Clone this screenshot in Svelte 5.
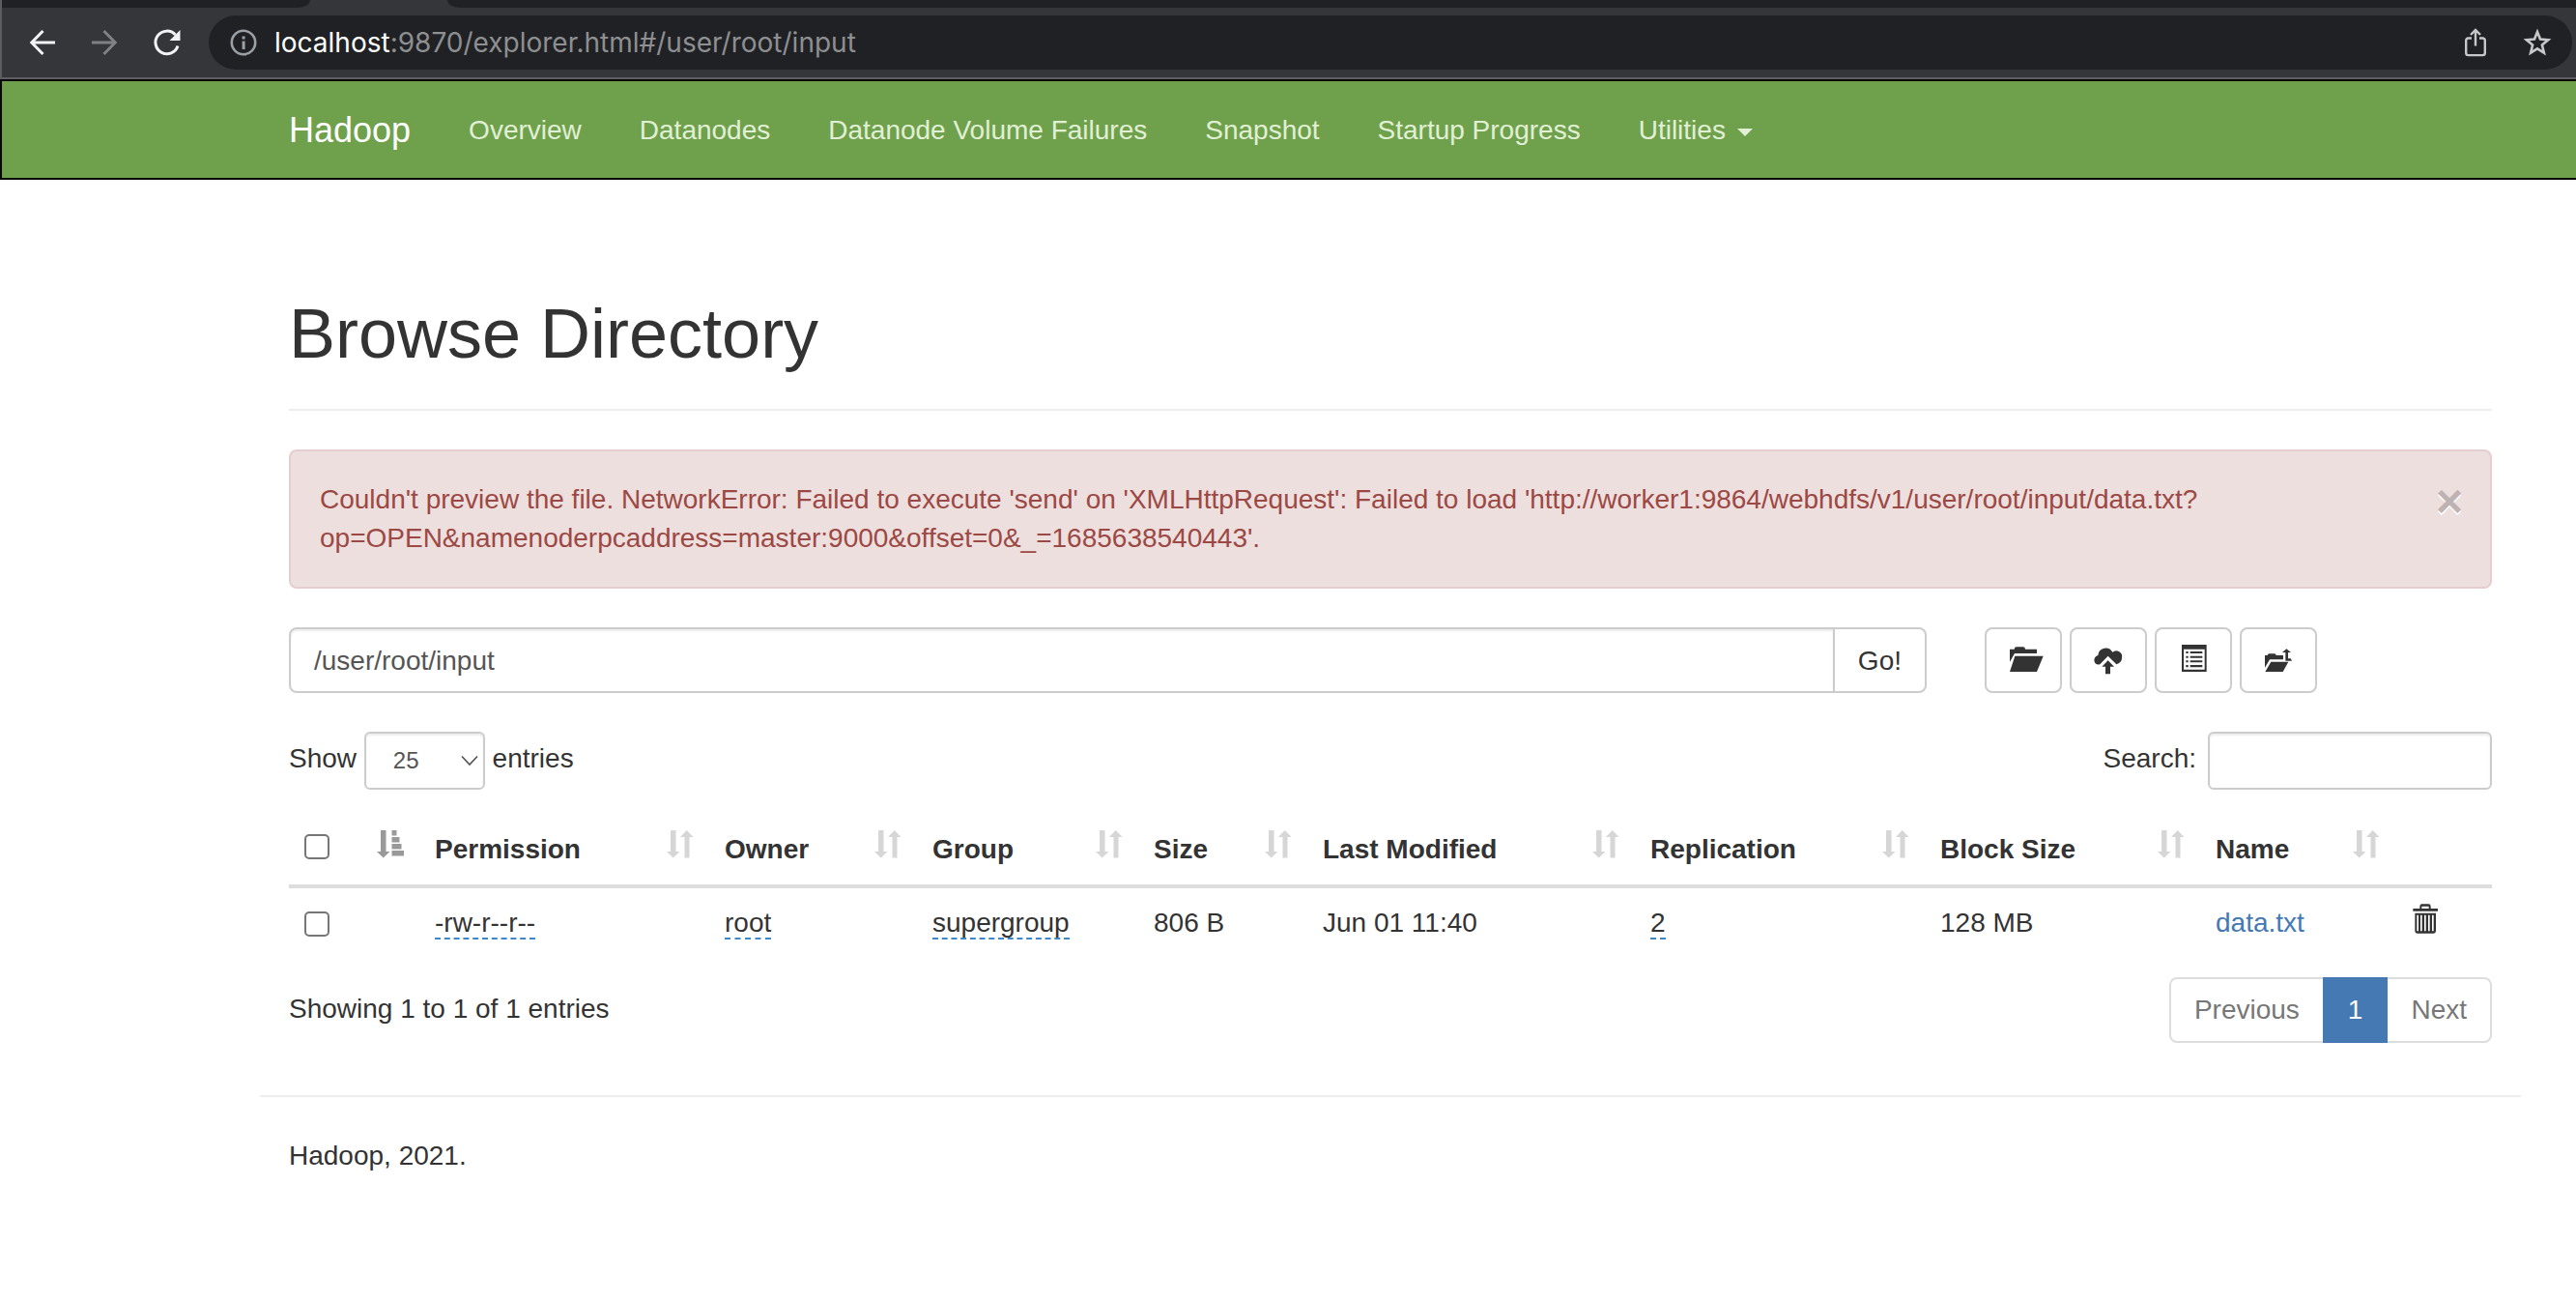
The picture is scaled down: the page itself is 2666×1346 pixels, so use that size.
<script>
  const navLinks = ['Overview', 'Datanodes', 'Datanode Volume Failures', 'Snapshot', 'Startup Progress'];

  // Relative column weights, turned into percentages for the <col> elements.
  const columns = [
    { key: 'select', weight: 64 },
    { key: 'order', weight: 71, sort: 'asc' },
    { key: 'permission', label: 'Permission', weight: 300, sort: 'both' },
    { key: 'owner', label: 'Owner', weight: 215, sort: 'both' },
    { key: 'group', label: 'Group', weight: 229, sort: 'both' },
    { key: 'size', label: 'Size', weight: 175, sort: 'both' },
    { key: 'modified', label: 'Last Modified', weight: 339, sort: 'both' },
    { key: 'replication', label: 'Replication', weight: 300, sort: 'both' },
    { key: 'block', label: 'Block Size', weight: 285, sort: 'both' },
    { key: 'name', label: 'Name', weight: 202, sort: 'both' },
    { key: 'remove', weight: 100 }
  ];
  const total = columns.reduce((sum, c) => sum + c.weight, 0);

  const files = [
    {
      permission: '-rw-r--r--',
      owner: 'root',
      group: 'supergroup',
      size: '806 B',
      modified: 'Jun 01 11:40',
      replication: '2',
      block: '128 MB',
      name: 'data.txt'
    }
  ];

  let path = $state('/user/root/input');
  let pageSize = $state('25');
  let search = $state('');
</script>

<div class="browser">
  <div class="tabs"><span class="tab-before"></span><span class="tab-after"></span></div>
  <div class="toolbar">
    <button class="tool back" aria-label="Back">
      <svg width="26" height="26" viewBox="0 0 26 26" fill="none" stroke="#f1f3f4" stroke-width="3"><path d="M26 13H2M13.500 1L1.800 13l11.700 12" /></svg>
    </button>
    <button class="tool forward" aria-label="Forward">
      <svg width="26" height="26" viewBox="0 0 26 26" fill="none" stroke="#808184" stroke-width="3"><path d="M0 13h24M12.500 1l11.700 12-11.700 12" /></svg>
    </button>
    <button class="tool reload" aria-label="Reload">
      <svg width="28" height="28" viewBox="0 0 28 28"><path d="M25 17.500A11.800 11.800 0 1 1 22.500 6" fill="none" stroke="#f1f3f4" stroke-width="3" /><path d="M27.500 1v11H16.500z" fill="#f1f3f4" /></svg>
    </button>
    <div class="omnibox">
      <svg class="info" width="28" height="28" viewBox="0 0 28 28"><circle cx="14" cy="14" r="12.200" fill="none" stroke="#9aa0a6" stroke-width="2.600" /><path d="M12.600 7.500h3v3h-3zM12.600 12.500h3v8.500h-3z" fill="#9aa0a6" /></svg>
      <span class="url"><b>localhost</b>:9870/explorer.html#/user/root/input</span>
      <button class="tool share" aria-label="Share">
        <svg width="24" height="30" viewBox="0 0 24 30" fill="none" stroke="#c6c7c8" stroke-width="2.400"><path d="M8 10.500H4.500a2.300 2.300 0 0 0-2.300 2.300v13a2.300 2.300 0 0 0 2.300 2.300h15a2.300 2.300 0 0 0 2.300-2.300v-13a2.300 2.300 0 0 0-2.300-2.300H16M12 18.500V2.500M7 7l5-5 5 5" /></svg>
      </button>
      <button class="tool" aria-label="Bookmark">
        <svg width="30" height="30" viewBox="0 0 30 30" fill="none" stroke="#c6c7c8" stroke-width="2.600"><path d="M15 4l3 7.600 8.200.600-6.300 5.300 2 8.100L15 21.300l-6.900 4.300 2-8.100-6.300-5.300 8.200-.600z" /></svg>
      </button>
    </div>
  </div>
</div>

<nav class="navbar">
  <a class="brand" href="#home">Hadoop</a>
  {#each navLinks as link}
    <a class="nav-link" href="#nav">{link}</a>
  {/each}
  <a class="nav-link" href="#utilities">Utilities <span class="caret"></span></a>
</nav>

<main class="container">
  <header class="page-header"><h1>Browse Directory</h1></header>

  <div class="alert" role="alert">
    <p>Couldn't preview the file. NetworkError: Failed to execute 'send' on 'XMLHttpRequest': Failed to load 'http://worker1:9864/webhdfs/v1/user/root/input/data.txt?<wbr />op=OPEN&amp;namenoderpcaddress=master:9000&amp;offset=0&amp;_=1685638540443'.</p>
    <button class="close" aria-label="Close">×</button>
  </div>

  <div class="path-row">
    <form class="path-form" onsubmit={(e) => e.preventDefault()}>
      <input class="path" type="text" aria-label="Directory" bind:value={path} />
      <button class="go">Go!</button>
    </form>
    <div class="actions">
      <button class="btn" aria-label="Create directory">
        <svg viewBox="120 87 84 84"><path d="M120 134V95h14q0-7 7-7h20q7 0 7 7h36v13h-69zM136 116h88l-20 49h-84z" /></svg>
      </button>
      <button class="btn" aria-label="Upload files">
        <svg viewBox="384 87 84 84"><path d="M400 142Q384 145 382 130Q382 118 394 114A24 24 0 0 1 439 104A18 18 0 0 1 468 122Q468 136 451 142L425 116z" /><path d="M425 130l19 19h-12v23h-15v-23h-11z" /></svg>
      </button>
      <button class="btn" aria-label="Cut and paste">
        <svg viewBox="648 87 84 84"><path fill-rule="evenodd" d="M654 81h77v84h-77zM660 95v63h65V95z" /><path d="M667 102h7v6h-7zM680 102h38v6h-38zM667 116h7v6h-7zM680 116h38v6h-38zM667 130h7v6h-7zM680 130h38v6h-38zM667 144h7v7h-7zM680 144h38v7h-38z" /></svg>
      </button>
      <button class="btn" aria-label="Parent directory">
        <svg viewBox="909 87 84 84"><path d="M909 152v-38h8q1-5 5-5h17q5 0 5 5h22v13h-42zM928 134h54l-17 31h-55zM976 94l14 11h-9v19h8l4 7h-20v-26h-10z" /></svg>
      </button>
    </div>
  </div>

  <div class="table-tools">
    <label>Show
      <span class="select-wrap"><select bind:value={pageSize}><option>25</option><option>50</option><option>100</option></select><svg class="chevron" width="18" height="12" viewBox="0 0 18 12" fill="none" stroke="#555" stroke-width="1.700"><path d="M1 1.500l8 8.500 8-8.500" /></svg></span>
      entries</label>
    <label class="search">Search:<input type="search" bind:value={search} /></label>
  </div>

  <table>
    <colgroup>
      {#each columns as c}<col style:width="{(c.weight / total) * 100}%" />{/each}
    </colgroup>
    <thead>
      <tr>
        {#each columns as c}
          <th scope="col">
            {#if c.key === 'select'}
              <input type="checkbox" aria-label="Select all" />
            {:else if c.sort}
              <div class="head">
                <span>{c.label ?? ''}</span>
                {#if c.sort === 'both'}
                  <svg width="28" height="29" viewBox="0 0 28 29" fill="#d6d6d6"><path d="M4 0h5.500v22H13.500L6.700 28.500 0 22h4zM18.500 28.500V7H14L20.700 0l6.800 7H23.500v21.500z" /></svg>
                {:else}
                  <svg width="28" height="29" viewBox="0 0 28 29" fill="#999"><path d="M4 0h5.500v22H13.500L6.700 28.500 0 22h4zM15.500 0h5v5.500h-5zM15.500 7h8v5.500h-8zM15.500 14h10v5.500h-10zM15.500 21h12.500v5.500h-12.500z" /></svg>
                {/if}
              </div>
            {/if}
          </th>
        {/each}
      </tr>
    </thead>
    <tbody>
      {#each files as f}
        <tr>
          <td><input type="checkbox" aria-label="Select {f.name}" /></td>
          <td></td>
          <td><a class="editable" href="#permission">{f.permission}</a></td>
          <td><a class="editable" href="#owner">{f.owner}</a></td>
          <td><a class="editable" href="#group">{f.group}</a></td>
          <td>{f.size}</td>
          <td>{f.modified}</td>
          <td><a class="editable" href="#replication">{f.replication}</a></td>
          <td>{f.block}</td>
          <td><a class="file" href="#file">{f.name}</a></td>
          <td>
            <button class="trash" aria-label="Delete {f.name}">
              <svg width="28" height="31" viewBox="887 289 84 93"><path fill="#333" fill-rule="evenodd" d="M891 304h21v-7q0-7 7-7h20q7 0 7 7v7h22v8h-77zM918 304h22v-7h-22zM897 318h65v56q0 7-7 7h-51q-7 0-7-7zM903 324v50h5v-50zM914 324v50h5v-50zM926 324v50h5v-50zM938 324v50h5v-50zM950 324v50h5v-50z" /></svg>
            </button>
          </td>
        </tr>
      {/each}
    </tbody>
  </table>

  <div class="table-foot">
    <p>Showing 1 to 1 of 1 entries</p>
    <ul class="pagination">
      <li><a href="#previous">Previous</a></li>
      <li><a class="active" href="#1" aria-current="page">1</a></li>
      <li><a href="#next">Next</a></li>
    </ul>
  </div>
</main>

<footer><p>Hadoop, 2021.</p></footer>

<style>
  :global(body) {
    background: #fff;
    color: #333;
    font: 28px/40px 'Liberation Sans', Arial, sans-serif;
  }
  :global(*) { box-sizing: border-box; }
  p, h1, ul { margin: 0; padding: 0; }
  a { color: inherit; text-decoration: none; }
  button, input, select { margin: 0; font: inherit; color: inherit; }
  svg { display: block; flex: none; overflow: visible; }

  .browser {
    background: #35363a;
    border-left: 2px solid #5c5d60;
    border-bottom: 2px solid #5f5f63;
  }
  .tabs { display: flex; gap: 142px; height: 8px; }
  .tabs span { background: #202124; }
  .tab-before { width: 319px; border-bottom-right-radius: 14px 8px; }
  .tab-after { flex: 1; border-bottom-left-radius: 14px 8px; }
  .toolbar {
    display: flex;
    align-items: center;
    height: 72px;
    padding: 0 4px 0 29px;
  }
  .tool { padding: 0; border: 0; background: none; }
  .forward { margin-left: 38px; }
  .reload { margin: 0 29px 0 38px; }
  .omnibox {
    flex: 1;
    display: flex;
    align-items: center;
    height: 56px;
    padding: 0 21px 0 22px;
    border-radius: 28px;
    background: #202124;
  }
  .info { margin-right: 18px; }
  .url {
    flex: 1;
    color: #8e8f91;
    font-family: Inter, Roboto, sans-serif;
    font-size: 28px;
  }
  .url b { color: #fff; font-weight: 400; }
  .share { margin-right: 37px; }

  .navbar {
    display: flex;
    align-items: center;
    height: 104px;
    padding-left: 267px;
    border: 2px solid #080808;
    border-width: 2px 0 2px 2px;
    background: #6fa14c;
  }
  .navbar a { padding: 2px 30px 0; white-space: nowrap; }
  .navbar .brand { color: #fff; font-size: 36px; }
  .nav-link { color: #e1efd5; }
  .caret {
    display: inline-block;
    margin-left: 4px;
    vertical-align: middle;
    border: solid transparent;
    border-width: 8px 8px 0;
    border-top-color: #e1efd5;
  }

  .container { padding: 119px 87px 0 299px; }
  .page-header { padding-bottom: 38px; border-bottom: 2px solid #eee; }
  h1 { font-size: 72px; line-height: 80px; font-weight: 400; }

  .alert {
    display: flex;
    justify-content: space-between;
    align-items: flex-start;
    gap: 20px;
    margin: 40px 0;
    padding: 30px 28px 30px 30px;
    border: 2px solid #e6cdd0;
    border-radius: 8px;
    background: #eedfdf;
    color: #9c4844;
  }
  .close {
    padding: 0;
    border: 0;
    background: none;
    color: #beb2b2;
    font-size: 48px;
    line-height: 44px;
    font-weight: 700;
    text-shadow: 0 2px 0 #fff;
  }

  .path-row { display: grid; grid-template-columns: 3fr 1fr; margin: 0 -30px; }
  .path-form { display: flex; margin: 0 30px; }
  .path {
    flex: 1;
    min-width: 0;
    height: 68px;
    padding: 2px 24px 0;
    border: 2px solid #ccc;
    border-radius: 8px 0 0 8px;
    background: #fff;
    box-shadow: inset 0 2px 2px rgba(0, 0, 0, 0.08);
    color: #555;
  }
  .go, .btn {
    height: 68px;
    padding: 0 24px;
    border: 2px solid #ccc;
    border-radius: 8px;
    background: #fff;
  }
  .go { margin-left: -2px; padding-top: 2px; border-radius: 0 8px 8px 0; }
  .actions { display: flex; gap: 8px; margin: 0 30px; }
  .btn svg { width: 28px; height: 28px; fill: #333; }

  .table-tools { display: flex; justify-content: space-between; margin-top: 40px; }
  .select-wrap { position: relative; display: inline-block; vertical-align: middle; }
  .table-tools select, .table-tools input {
    height: 60px;
    border: 2px solid #ccc;
    border-radius: 6px;
    background: #fff;
    box-shadow: inset 0 2px 2px rgba(0, 0, 0, 0.08);
    color: #555;
    font-size: 24px;
    appearance: none;
  }
  .table-tools select { display: block; width: 125px; padding: 0 28px; }
  .chevron { position: absolute; right: 7px; top: 24px; pointer-events: none; }
  .table-tools input { width: 294px; margin-left: 12px; padding: 0 20px; vertical-align: middle; }

  table { width: 100%; margin-top: 26px; border-collapse: separate; border-spacing: 0; table-layout: fixed; }
  th, td { padding: 16px; text-align: left; vertical-align: top; white-space: nowrap; }
  th { border-bottom: 4px solid #ddd; }
  td { height: 72px; }
  .head { display: flex; justify-content: space-between; align-items: flex-start; height: 40px; }
  input[type='checkbox'] {
    display: block;
    appearance: none;
    width: 26px;
    height: 26px;
    margin-top: 4px;
    border: 2px solid #767676;
    border-radius: 5px;
    background: #fff;
  }
  td input[type='checkbox'] { margin-top: 8px; }
  .editable { border-bottom: 2px dashed #3d87cb; }
  .file { color: #4479b5; }
  .trash { display: block; margin-left: 1px; padding: 0; border: 0; background: none; }

  .table-foot { display: flex; justify-content: space-between; margin-top: 20px; }
  .table-foot p { padding-top: 13px; }
  .pagination { display: flex; list-style: none; }
  .pagination a {
    display: block;
    padding: 12px 24px;
    border: 2px solid #ddd;
    color: #777;
  }
  .pagination li + li { margin-left: -2px; }
  .pagination li:first-child a { border-radius: 8px 0 0 8px; }
  .pagination li:last-child a { border-radius: 0 8px 8px 0; }
  .pagination .active {
    position: relative;
    border-color: #4479b3;
    background: #4479b3;
    color: #fff;
  }

  footer {
    margin: 54px 57px 0 269px;
    padding: 41px 30px 60px;
    border-top: 2px solid #eee;
  }
</style>
